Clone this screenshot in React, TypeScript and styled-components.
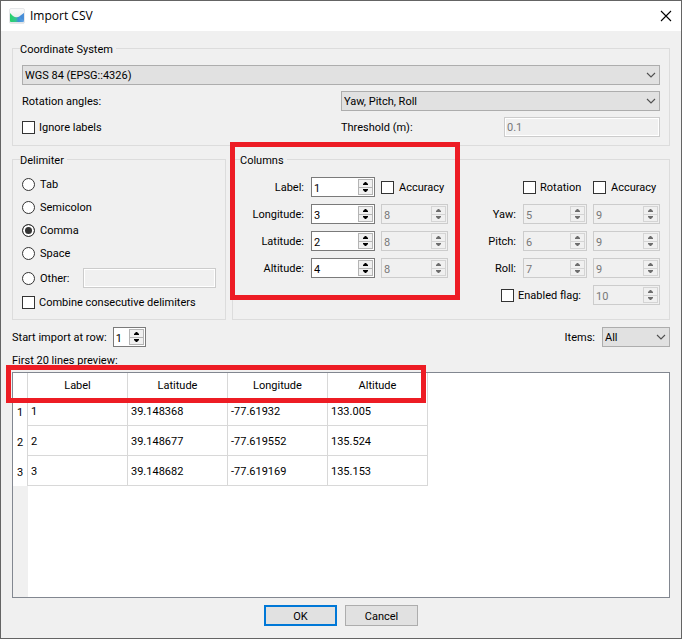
import React from 'react';
import styled, { createGlobalStyle, css } from 'styled-components';

const GlobalStyle = createGlobalStyle`
  *, *::before, *::after { box-sizing: border-box; }
  body { margin: 0; background: #f0f0f0; }
  body, button, input, select {
    font-family: Roboto, Tahoma, "Liberation Sans", sans-serif;
    font-size: 11px;
    line-height: 13px;
    color: #000;
  }
`;

const Window = styled.div`
  display: flex;
  flex-direction: column;
  min-height: 100vh;
  border: 1px solid #646464;
  background: #f0f0f0;
`;

const TitleBar = styled.header`
  display: flex;
  align-items: center;
  gap: 5px;
  height: 30px;
  padding: 0 9px 0 8px;
  background: #fff;
`;

const Title = styled.h1`
  flex: 1;
  margin: 0;
  font: 400 12px/16px "Open Sans", "Segoe UI", sans-serif;
`;

const CloseButton = styled.button`
  display: flex;
  padding: 0;
  border: 0;
  background: none;
`;

const Body = styled.form`
  flex: 1;
  display: flex;
  flex-direction: column;
  padding: 9px 11px 12px;
`;

const Group = styled.fieldset<{ $pad?: string }>`
  min-width: 0;
  margin: 0;
  padding: ${p => p.$pad ?? '8px 9px'};
  border: 1px solid #dcdcdc;
`;

const Legend = styled.legend`
  height: 17px;
  margin-left: -2px;
  padding: 0 3px 0 0;
  line-height: 19px;
`;

const CoordinateGrid = styled.div`
  display: grid;
  grid-template-columns: 1fr 1fr;
  grid-auto-rows: 20px;
  row-gap: 6px;
  align-items: center;
`;

const ThresholdRow = styled.div`
  display: grid;
  grid-template-columns: 1fr 1fr;
  column-gap: 7px;
  align-items: center;
`;

const SelectBox = styled.span<{ $wide?: boolean }>`
  display: grid;
  align-items: center;
  ${p => p.$wide && css`grid-column: 1 / -1;`}
  & > * { grid-area: 1 / 1; }
  & > svg { justify-self: end; margin-right: 4px; pointer-events: none; }
`;

const NativeSelect = styled.select`
  appearance: none;
  width: 100%;
  height: 20px;
  padding: 1px 20px 0 2px;
  border: 1px solid #adadad;
  border-radius: 0;
  background: #e1e1e1;
`;

const TextInput = styled.input`
  width: 100%;
  min-width: 0;
  height: 20px;
  padding: 2px 2px 1px;
  border: 1px solid #ccc;
  background: #f0f0f0;
  box-shadow: inset 0 0 0 1px #fff;
  &:disabled { color: #787878; }
`;

const Option = styled.label<{ $gap?: number }>`
  display: inline-flex;
  align-items: center;
  gap: ${p => p.$gap ?? 5}px;
  height: 17px;
  line-height: 15px;
  white-space: nowrap;
`;

const Check = styled.input`
  appearance: none;
  flex: none;
  width: 13px;
  height: 13px;
  margin: 0;
  border: 1px solid #333;
  background: #fff;
  &:checked { background: #333; box-shadow: inset 0 0 0 2px #fff; }
`;

const Radio = styled(Check)`
  border-radius: 50%;
`;

const Groups = styled.div`
  display: grid;
  grid-template-columns: 214px 1fr;
  gap: 6px;
  margin-top: 5px;
`;

const OptionList = styled.div`
  display: flex;
  flex-direction: column;
  align-items: flex-start;
  gap: 6px;
`;

const OtherRow = styled.div`
  display: grid;
  grid-template-columns: 55px 1fr;
  column-gap: 6px;
  align-items: center;
  width: 100%;
`;

const Blocks = styled.div`
  display: flex;
  justify-content: space-between;
  align-items: flex-start;
`;

const ColumnGrid = styled.div`
  position: relative;
  display: grid;
  grid-template-columns: 63px 64px 67px;
  grid-auto-rows: 20px;
  gap: 7px 6px;
  align-items: center;
  white-space: nowrap;
`;

const RotationGrid = styled(ColumnGrid)`
  grid-template-columns: 30px 64px 67px;
`;

const FieldLabel = styled.label`
  justify-self: end;
  padding: 1px 1px 0 0;
`;

const FlagCell = styled.span`
  grid-column: 1 / 3;
  justify-self: end;
  display: flex;
  padding-right: 6px;
`;

const RotationCheckCell = styled.span`
  grid-column: 2;
  display: flex;
`;

const SpinBox = styled.span<{ $off?: boolean; $width?: number }>`
  display: flex;
  height: 20px;
  ${p => p.$width && css`width: ${p.$width}px;`}
  padding: 1px;
  border: 1px solid ${p => (p.$off ? '#ccc' : '#7a7a7a')};
  background: ${p => (p.$off ? '#f0f0f0' : '#fff')};
`;

const SpinInput = styled.input`
  flex: 1;
  min-width: 0;
  padding: 2px 0 0 1px;
  border: 0;
  background: transparent;
  outline: 0;
  &:disabled { color: #787878; }
`;

const SpinButtons = styled.span<{ $off?: boolean }>`
  display: grid;
  grid-template-rows: 1fr 1fr;
  width: 15px;
  border: 1px solid ${p => (p.$off ? '#d4d4d4' : '#b4b4b4')};
  background: ${p => (p.$off ? '#d4d4d4' : '#b4b4b4')};
  row-gap: 1px;
`;

const SpinButton = styled.button`
  display: flex;
  align-items: center;
  justify-content: center;
  min-height: 0;
  padding: 0;
  border: 0;
  background: #f0f0f0;
  color: #000;
  &:disabled { color: #6d6d6d; }
`;

const ImportRow = styled.div`
  display: flex;
  align-items: center;
  gap: 6px;
  margin-top: 7px;
  line-height: 15px;
`;

const ItemsLabel = styled.label`
  margin-left: auto;
  padding-right: 1px;
`;

const ItemsSelect = styled(SelectBox)`
  width: 68px;
`;

const PreviewCaption = styled.p`
  margin: 7px 0 5px;
`;

const Preview = styled.div`
  position: relative;
  flex: 1;
  border: 1px solid #828790;
  background: linear-gradient(#f0f0f0, #f0f0f0) left / 15px 100% no-repeat #fff;
`;

const Table = styled.table`
  table-layout: fixed;
  width: 415px;
  border-collapse: separate;
  border-spacing: 0;
  background: #fff;
`;

const HeadCell = styled.th<{ $width: number }>`
  width: ${p => p.$width}px;
  height: 23px;
  padding: 1px 0 0;
  border-right: 1px solid #d8d8d8;
  font-weight: 400;
  text-align: center;
`;

const RowHead = styled.th`
  padding: 2px 0 0;
  border-right: 1px solid #d8d8d8;
  font-weight: 400;
  text-align: center;
`;

const Cell = styled.td`
  height: 30px;
  padding: 2px 3px 0;
  border-right: 1px solid #d8d8d8;
  border-bottom: 1px solid #d8d8d8;
`;

const Highlight = styled.span<{ $inset: string }>`
  position: absolute;
  inset: ${p => p.$inset};
  border: 5px solid #ed1c24;
  pointer-events: none;
`;

const TableHighlightArea = styled.div`
  position: relative;
  width: 415px;
`;

const Actions = styled.footer`
  display: flex;
  justify-content: center;
  gap: 8px;
  margin-top: 7px;
`;

const ActionButton = styled.button<{ $primary?: boolean }>`
  width: 73px;
  height: 21px;
  padding: 1px 0 0;
  border: ${p => (p.$primary ? '2px solid #0078d7' : '1px solid #adadad')};
  background: #e1e1e1;
`;

function AppIcon() {
  return (
    <svg width="16" height="16" viewBox="0 0 16 16" aria-hidden="true">
      <defs>
        <linearGradient id="tile" x1="0" y1="0" x2="0" y2="1">
          <stop offset="0" stopColor="#fbfbfb" />
          <stop offset="1" stopColor="#dfe3e6" />
        </linearGradient>
        <linearGradient id="terrain" x1="0" y1="0" x2="1" y2="0">
          <stop offset="0" stopColor="#25d366" />
          <stop offset="0.4" stopColor="#35c58f" />
          <stop offset="0.62" stopColor="#3f8fd8" />
          <stop offset="1" stopColor="#62a4e4" />
        </linearGradient>
      </defs>
      <rect x="0.5" y="0.5" width="15" height="15" rx="1.5" fill="url(#tile)" stroke="#e6e8ea" />
      <path d="M1 5 L4 8 Q7.5 10.5 11 8 L15 5 V13 Q15 14 14 14 H2 Q1 14 1 13 Z" fill="url(#terrain)" />
      <path d="M11 8 L15 5 V12 L12.5 11 Z" fill="#3d7fcf" opacity="0.55" />
    </svg>
  );
}

function Chevron() {
  return (
    <svg width="10" height="6" viewBox="0 0 10 6" aria-hidden="true">
      <path d="M1 1 L5 5 L9 1" fill="none" stroke="#505050" strokeWidth="1.1" />
    </svg>
  );
}

function Arrow({ down }: { down?: boolean }) {
  return (
    <svg width="5" height="3" viewBox="0 0 5 3" aria-hidden="true">
      <path d={down ? 'M0 0 H5 V1 L3 3 H2 L0 1 Z' : 'M0 3 H5 V2 L3 0 H2 L0 2 Z'} fill="currentColor" />
    </svg>
  );
}

interface SelectProps { id?: string; label?: string; value: string; wide?: boolean; narrow?: boolean }

function Select({ id, label, value, wide, narrow }: SelectProps) {
  const Box = narrow ? ItemsSelect : SelectBox;
  return (
    <Box $wide={wide}>
      <NativeSelect id={id} aria-label={label} defaultValue={value}>
        <option>{value}</option>
      </NativeSelect>
      <Chevron />
    </Box>
  );
}

interface SpinProps { id?: string; label: string; value: number; off?: boolean; width?: number }

function Spin({ id, label, value, off, width }: SpinProps) {
  const [current, setCurrent] = React.useState(String(value));
  const step = (by: number) => setCurrent(String(Math.max(1, (Number(current) || 0) + by)));
  return (
    <SpinBox $off={off} $width={width}>
      <SpinInput
        id={id}
        aria-label={id ? undefined : label}
        inputMode="numeric"
        value={current}
        disabled={off}
        onChange={e => setCurrent(e.target.value)}
      />
      <SpinButtons $off={off}>
        <SpinButton type="button" aria-label={`Increase ${label}`} disabled={off} onClick={() => step(1)}><Arrow /></SpinButton>
        <SpinButton type="button" aria-label={`Decrease ${label}`} disabled={off} onClick={() => step(-1)}><Arrow down /></SpinButton>
      </SpinButtons>
    </SpinBox>
  );
}

const delimiters = ['Tab', 'Semicolon', 'Comma', 'Space'];
const positions = [
  { name: 'Longitude', column: 3 },
  { name: 'Latitude', column: 2 },
  { name: 'Altitude', column: 4 },
];
const rotations = [
  { name: 'Yaw', column: 5 },
  { name: 'Pitch', column: 6 },
  { name: 'Roll', column: 7 },
];
const headers = ['Label', 'Latitude', 'Longitude', 'Altitude'];
const rows = [
  ['1', '39.148368', '-77.61932', '133.005'],
  ['2', '39.148677', '-77.619552', '135.524'],
  ['3', '39.148682', '-77.619169', '135.153'],
];

export default function App() {
  return (
    <Window>
      <GlobalStyle />
      <TitleBar>
        <AppIcon />
        <Title>Import CSV</Title>
        <CloseButton type="button" aria-label="Close">
          <svg width="12" height="12" viewBox="0 0 12 12">
            <path d="M1 1 L11 11 M11 1 L1 11" fill="none" stroke="#000" strokeWidth="1.1" />
          </svg>
        </CloseButton>
      </TitleBar>
      <Body onSubmit={e => e.preventDefault()}>
        <Group>
          <Legend>Coordinate System</Legend>
          <CoordinateGrid>
            <Select wide label="Coordinate system" value="WGS 84 (EPSG::4326)" />
            <label htmlFor="angles">Rotation angles:</label>
            <Select id="angles" value="Yaw, Pitch, Roll" />
            <Option $gap={4}><Check type="checkbox" />Ignore labels</Option>
            <ThresholdRow>
              <label htmlFor="threshold">Threshold (m):</label>
              <TextInput id="threshold" defaultValue="0.1" disabled />
            </ThresholdRow>
          </CoordinateGrid>
        </Group>

        <Groups>
          <Group>
            <Legend>Delimiter</Legend>
            <OptionList>
              {delimiters.map(name => (
                <Option key={name}>
                  <Radio type="radio" name="delimiter" defaultChecked={name === 'Comma'} />{name}
                </Option>
              ))}
              <OtherRow>
                <Option><Radio type="radio" name="delimiter" />Other:</Option>
                <TextInput aria-label="Other delimiter" disabled />
              </OtherRow>
              <Option $gap={4}><Check type="checkbox" />Combine consecutive delimiters</Option>
            </OptionList>
          </Group>

          <Group $pad="9px 9px 14px">
            <Legend>Columns</Legend>
            <Blocks>
              <ColumnGrid>
                <FieldLabel htmlFor="col-label">Label:</FieldLabel>
                <Spin id="col-label" label="label column" value={1} />
                <Option><Check type="checkbox" />Accuracy</Option>
                {positions.map(({ name, column }) => (
                  <React.Fragment key={name}>
                    <FieldLabel htmlFor={name}>{name}:</FieldLabel>
                    <Spin id={name} label={`${name} column`} value={column} />
                    <Spin label={`${name} accuracy column`} value={8} off />
                  </React.Fragment>
                ))}
                <Highlight $inset="-35px -12px -22px -12px" />
              </ColumnGrid>
              <RotationGrid>
                <RotationCheckCell>
                  <Option $gap={4}><Check type="checkbox" />Rotation</Option>
                </RotationCheckCell>
                <Option><Check type="checkbox" />Accuracy</Option>
                {rotations.map(({ name, column }) => (
                  <React.Fragment key={name}>
                    <FieldLabel htmlFor={name}>{name}:</FieldLabel>
                    <Spin id={name} label={`${name} column`} value={column} off />
                    <Spin label={`${name} accuracy column`} value={9} off />
                  </React.Fragment>
                ))}
                <FlagCell>
                  <Option $gap={4}><Check type="checkbox" />Enabled flag:</Option>
                </FlagCell>
                <Spin label="enabled flag column" value={10} off />
              </RotationGrid>
            </Blocks>
          </Group>
        </Groups>

        <ImportRow>
          <label htmlFor="start-row">Start import at row:</label>
          <Spin id="start-row" label="start row" value={1} width={33} />
          <ItemsLabel htmlFor="items">Items:</ItemsLabel>
          <Select id="items" value="All" narrow />
        </ImportRow>
        <PreviewCaption>First 20 lines preview:</PreviewCaption>

        <Preview>
          <TableHighlightArea>
            <Table>
              <thead>
                <tr>
                  <HeadCell $width={15} />
                  {headers.map(name => <HeadCell key={name} $width={100} scope="col">{name}</HeadCell>)}
                </tr>
              </thead>
              <tbody>
                {rows.map((row, i) => (
                  <tr key={row[0]}>
                    <RowHead scope="row">{i + 1}</RowHead>
                    {row.map((value, j) => <Cell key={headers[j]}>{value}</Cell>)}
                  </tr>
                ))}
              </tbody>
            </Table>
            <Highlight $inset="-8px 2px 83px -7px" />
          </TableHighlightArea>
        </Preview>

        <Actions>
          <ActionButton type="submit" $primary>OK</ActionButton>
          <ActionButton type="button">Cancel</ActionButton>
        </Actions>
      </Body>
    </Window>
  );
}
